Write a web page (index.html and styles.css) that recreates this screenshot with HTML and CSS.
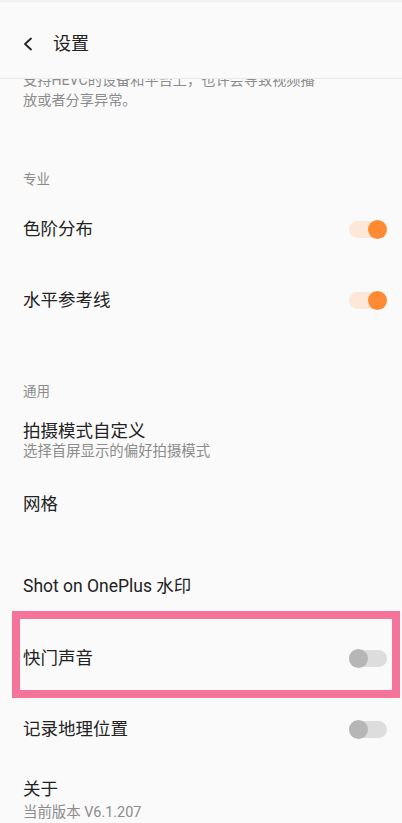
FILE: index.html
```html
<!DOCTYPE html>
<html lang="zh-CN">
<head>
<meta charset="utf-8">
<title>设置</title>
<link rel="stylesheet" href="styles.css">
</head>
<body>
<div class="screen">
  <header class="topbar">
    <svg class="back" width="12" height="14" viewBox="0 0 12 14" aria-hidden="true">
      <path d="M9 1.5 L3 7 L9 12.5" fill="none" stroke="#222" stroke-width="1.8" stroke-linecap="round" stroke-linejoin="round"/>
    </svg>
    <h1 class="title">设置</h1>
  </header>
  <main class="content">
    <p class="desc">支持HEVC的设备和平台上，也许会导致视频播<br>放或者分享异常。</p>

    <div class="section section-first">专业</div>
    <div class="row">
      <span class="label">色阶分布</span>
      <span class="toggle on"><span class="thumb"></span></span>
    </div>
    <div class="row">
      <span class="label">水平参考线</span>
      <span class="toggle on"><span class="thumb"></span></span>
    </div>

    <div class="section">通用</div>
    <div class="row row-two">
      <div class="texts">
        <span class="label">拍摄模式自定义</span>
        <span class="sub">选择首屏显示的偏好拍摄模式</span>
      </div>
    </div>
    <div class="row">
      <span class="label">网格</span>
    </div>
    <div class="row row-shot">
      <span class="label">Shot on OnePlus 水印</span>
    </div>
    <div class="row row-highlight">
      <span class="label">快门声音</span>
      <span class="toggle off"><span class="thumb"></span></span>
      <span class="highlight"></span>
    </div>
    <div class="row">
      <span class="label">记录地理位置</span>
      <span class="toggle off"><span class="thumb"></span></span>
    </div>
    <div class="row row-about">
      <div class="texts">
        <span class="label label-about">关于</span>
        <span class="sub sub-about">当前版本 V6.1.207</span>
      </div>
    </div>
  </main>
</div>
</body>
</html>
```

FILE: styles.css
```css
* { box-sizing: border-box; margin: 0; padding: 0; }

html, body {
  width: 402px;
  height: 823px;
  overflow: hidden;
  background: #fafafa;
}

body {
  font-family: Roboto, "Noto Sans CJK SC", "Noto Sans", sans-serif;
  color: #222;
}

.screen {
  width: 402px;
  height: 823px;
  display: flex;
  flex-direction: column;
  overflow: hidden;
  border-top: 2px solid #f1f1f1;
}

.topbar {
  height: 77px;
  flex: none;
  display: flex;
  align-items: center;
  padding-left: 22px;
  padding-top: 8px;
  border-bottom: 1px solid #ebebeb;
  background: #fafafa;
  position: relative;
  z-index: 2;
}

.back { display: block; margin-right: 19px; }

.title {
  font-size: 18px;
  font-weight: 400;
  color: #222;
  line-height: 24px;
}

.content {
  flex: 1;
  overflow: hidden;
  position: relative;
}

.desc {
  margin-top: -9px;
  padding: 0 23px;
  font-size: 14.2px;
  line-height: 20px;
  color: #8c8c8c;
}

.section {
  padding: 45px 23px 0;
  font-size: 13.5px;
  line-height: 20px;
  color: #8c8c8c;
}

.section-first { padding-top: 59px; padding-bottom: 5px; }

.row {
  height: 71px;
  display: flex;
  align-items: center;
  justify-content: space-between;
  padding: 0 15px 0 23px;
  position: relative;
}

.label {
  font-size: 17.5px;
  line-height: 21px;
  color: #222;
}

.texts { display: flex; flex-direction: column; }

.sub {
  font-size: 14.4px;
  line-height: 20px;
  color: #8c8c8c;
}

.row-two {
  height: 68px;
  align-items: flex-start;
  padding-top: 20px;
}

.row-shot { margin-top: 10px; height: 72px; }

.row-highlight { height: 72px; }

.row-about {
  height: auto;
  align-items: flex-start;
  padding-top: 12px;
}

.label-about { line-height: 24px; }
.sub-about { line-height: 24px; }

.toggle {
  position: relative;
  width: 38px;
  height: 17px;
  border-radius: 9px;
  flex: none;
}

.toggle .thumb {
  position: absolute;
  top: -1px;
  width: 19px;
  height: 19px;
  border-radius: 50%;
}

.toggle.on { background: #fde7d8; }
.toggle.on .thumb { right: 0; background: #fe8a33; }

.toggle.off { background: #dddddd; }
.toggle.off .thumb { left: 0; background: #b6b6b6; }

.highlight {
  position: absolute;
  left: 12px;
  right: 2px;
  top: -11px;
  height: 87px;
  border: 8px solid #f6749a;
  pointer-events: none;
}
```
